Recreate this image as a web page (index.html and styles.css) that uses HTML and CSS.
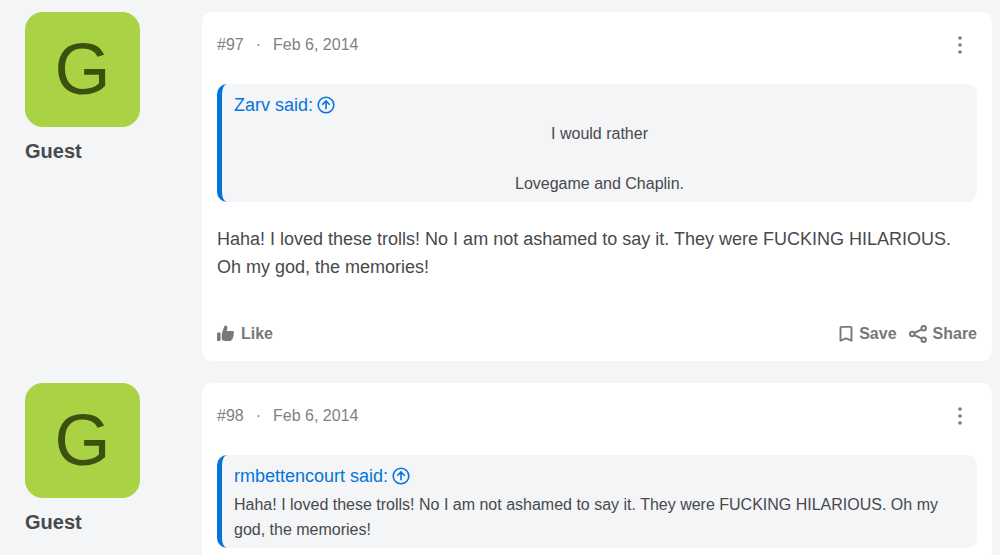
FILE: index.html
```html
<!DOCTYPE html>
<html lang="en">
<head>
<meta charset="utf-8">
<meta name="viewport" content="width=device-width, initial-scale=1">
<title>Thread</title>
<link rel="stylesheet" href="styles.css">
</head>
<body>
<svg class="sprite" aria-hidden="true">
  <symbol id="up" viewBox="0 0 18 18"><g fill="none" stroke="currentColor" stroke-width="1.6"><circle cx="9" cy="9" r="7.8"/><path d="M9 13.300V5.200M5.300 8.700 9 5l3.700 3.700"/></g></symbol>
  <symbol id="more" viewBox="0 0 4 18"><g fill="currentColor"><circle cx="2" cy="2" r="1.800"/><circle cx="2" cy="9" r="1.800"/><circle cx="2" cy="16" r="1.800"/></g></symbol>
  <symbol id="like" viewBox="0 0 18 18"><g fill="currentColor"><rect x="0" y="7.500" width="3.600" height="8.500" rx="1.200"/><path d="M4.800 8.500 7.200 1.700C7.500.8 7.900.4 8.600.4c1.200 0 1.800 1 1.800 2.200 0 1.300-.3 2.500-.8 3.500h5.700c1 0 1.700.7 1.700 1.600 0 .7-.3 1.200-.8 1.500.4.300.6.800.6 1.300 0 .8-.5 1.400-1.200 1.600.2.300.3.600.3 1 0 .8-.5 1.400-1.200 1.500 0 .8-.6 1.400-1.600 1.400H9.400c-2 0-3.400-.5-4.600-1.500z"/></g></symbol>
  <symbol id="save" viewBox="0 0 14 18"><path d="M2.500 1.900h9a1 1 0 0 1 1 1v12.800L7 13.300l-5.500 2.400V2.900a1 1 0 0 1 1-1z" fill="none" stroke="currentColor" stroke-width="1.900" stroke-linejoin="round"/></symbol>
  <symbol id="share" viewBox="0 0 18 18"><g fill="none" stroke="currentColor" stroke-width="2"><circle cx="3.200" cy="9" r="2.200"/><circle cx="14.700" cy="3.300" r="2.200"/><circle cx="14.700" cy="14.700" r="2.200"/><path d="m5.200 8 7.500-3.700M5.200 10l7.500 3.700"/></g></symbol>
</svg>
<main class="thread">
  <article class="post">
    <aside class="user">
      <div class="avatar">G</div>
      <h4 class="name">Guest</h4>
    </aside>
    <div class="card">
      <header class="meta">
        <span>#97</span><span class="dot">·</span><time datetime="2014-02-06">Feb 6, 2014</time>
        <button class="more" aria-label="More options"><svg class="icon-more"><use href="#more"/></svg></button>
      </header>
      <blockquote class="quote">
        <a class="source" href="#post-96">Zarv said: <svg class="icon"><use href="#up"/></svg></a>
        <div class="centered">I would rather<br><br>Lovegame and Chaplin.</div>
      </blockquote>
      <p class="message">Haha! I loved these trolls! No I am not ashamed to say it. They were FUCKING HILARIOUS.<br>Oh my god, the memories!</p>
      <footer class="actions">
        <button class="action like"><svg class="icon"><use href="#like"/></svg>Like</button>
        <button class="action"><svg class="icon-save"><use href="#save"/></svg>Save</button>
        <button class="action"><svg class="icon"><use href="#share"/></svg>Share</button>
      </footer>
    </div>
  </article>
  <article class="post">
    <aside class="user">
      <div class="avatar">G</div>
      <h4 class="name">Guest</h4>
    </aside>
    <div class="card">
      <header class="meta">
        <span>#98</span><span class="dot">·</span><time datetime="2014-02-06">Feb 6, 2014</time>
        <button class="more" aria-label="More options"><svg class="icon-more"><use href="#more"/></svg></button>
      </header>
      <blockquote class="quote">
        <a class="source" href="#post-97">rmbettencourt said: <svg class="icon"><use href="#up"/></svg></a>
        <div>Haha! I loved these trolls! No I am not ashamed to say it. They were FUCKING HILARIOUS. Oh my god, the memories!</div>
      </blockquote>
    </div>
  </article>
</main>
</body>
</html>
```
FILE: styles.css
```css
* { box-sizing: border-box; }
body {
  margin: 0;
  background: #f3f5f7;
  color: #48494c;
  font-family: "Liberation Sans", Arial, sans-serif;
  font-size: 18px;
}
.sprite { display: none; }
.thread {
  display: flex;
  flex-direction: column;
  gap: 22px;
  padding: 12px 8px 0 25px;
}
.post { display: flex; gap: 62px; }
.user { flex: 0 0 115px; }
.avatar {
  height: 115px;
  border-radius: 18px;
  background: #a9d244;
  color: #3c510f;
  font-size: 72px;
  line-height: 115px;
  text-align: center;
}
.name { margin: 12px 0 0; font-size: 20px; line-height: 25px; }
.card {
  flex: 1;
  min-width: 0;
  padding: 15px;
  border-radius: 10px;
  background: #fff;
}
.meta {
  display: flex;
  align-items: center;
  height: 36px;
  margin-bottom: 21px;
  color: #808183;
  font-size: 16px;
}
.dot { margin: 0 12px; }
button {
  padding: 0;
  border: 0;
  background: none;
  color: #77787a;
  font-family: inherit;
  cursor: pointer;
}
.more { display: flex; margin-left: auto; padding: 0 15px; }
.icon-more { width: 4px; height: 18px; }
.icon { flex: none; width: 18px; height: 18px; }
.icon-save { width: 14px; height: 18px; }
.quote {
  margin: 0;
  padding: 8px 12px 6px;
  border-left: 5px solid #0574db;
  border-radius: 10px;
  background: #f3f5f7;
  font-size: 16px;
  line-height: 25px;
}
.source {
  display: flex;
  align-items: center;
  gap: 4px;
  margin-bottom: 3px;
  color: #0574db;
  font-size: 18px;
  line-height: 26px;
  text-decoration: none;
}
.centered { text-align: center; }
.message { margin: 23px 0 0; font-size: 18px; line-height: 28px; }
.actions { display: flex; gap: 12px; margin-top: 41px; }
.action {
  display: flex;
  align-items: center;
  gap: 6px;
  font-size: 16px;
  font-weight: bold;
  line-height: 24px;
}
.like { margin-right: auto; }
```
